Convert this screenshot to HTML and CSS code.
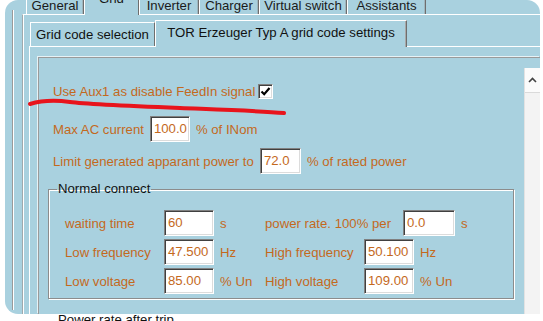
FILE: index.html
```html
<!DOCTYPE html>
<html lang="en">
<head>
  <meta charset="UTF-8">
  <title>Grid code settings</title>
  <link rel="stylesheet" href="styles.css">
</head>
<body>
  <div class="shot">
    <div class="edge"></div>
    <div class="outer">
      <!-- main tabs -->
      <div class="tabs">
        <div class="tab w58">General</div>
        <div class="tab w55 active">Grid</div>
        <div class="tab w60">Inverter</div>
        <div class="tab w60">Charger</div>
        <div class="tab w88">Virtual switch</div>
        <div class="tab w79">Assistants</div>
      </div>
      <div class="page">
        <!-- grid code tabs -->
        <div class="subtabs">
          <div class="subtab">Grid code selection</div>
          <div class="subtab active">TOR Erzeuger Typ A grid code settings</div>
        </div>
        <div class="subpage">
          <div class="scrollbox">
            <div class="content">
              <div class="line first">
                <span>Use Aux1 as disable FeedIn signal</span>
                <span class="check">
                  <svg width="11" height="11" viewBox="0 0 11 11"><path d="M1.5 5.5 L4.2 8.2 L9.5 2" fill="none" stroke="#000" stroke-width="2.2"/></svg>
                </span>
              </div>
              <div class="line">
                <span>Max AC current</span>
                <span class="field w40">100.0</span>
                <span>% of INom</span>
              </div>
              <div class="line">
                <span>Limit generated apparant power to</span>
                <span class="field w41">72.0</span>
                <span>% of rated power</span>
              </div>

              <fieldset class="group">
                <legend>Normal connect</legend>
                <div class="grow">
                  <span class="gl">waiting time</span>
                  <span class="field w50">60</span>
                  <span class="unit">s</span>
                  <span class="gl wide">power rate. 100% per</span>
                  <span class="field w52">0.0</span>
                  <span class="unit">s</span>
                </div>
                <div class="grow">
                  <span class="gl">Low frequency</span>
                  <span class="field w50">47.500</span>
                  <span class="unit">Hz</span>
                  <span class="gl">High frequency</span>
                  <span class="field w50">50.100</span>
                  <span class="unit">Hz</span>
                </div>
                <div class="grow">
                  <span class="gl">Low voltage</span>
                  <span class="field w50">85.00</span>
                  <span class="unit">% Un</span>
                  <span class="gl">High voltage</span>
                  <span class="field w50">109.00</span>
                  <span class="unit">% Un</span>
                </div>
              </fieldset>
              <div class="next-group">Power rate after trip</div>
            </div>
            <div class="scrollbar">
              <div class="sb-up">
                <svg width="9" height="6" viewBox="0 0 9 6"><path d="M1 5 L4.5 1.5 L8 5" fill="none" stroke="#444" stroke-width="1.6"/></svg>
              </div>
              <div class="sb-track"></div>
            </div>
          </div>
        </div>
      </div>
    </div>
  </div>

  <!-- red hand drawn mark -->
  <svg class="marker" width="543" height="321" viewBox="0 0 543 321">
    <path d="M30 104 C40 101 55 100 70 102 S130 106 180 108 S260 111 284 113" fill="none" stroke="#e8141c" stroke-width="4" stroke-linecap="round"/>
  </svg>
</body>
</html>
```

FILE: styles.css
```css
/* screenshot of the settings dialog */
body {
  margin: 0;
  background: #fff;
  font-family: "Liberation Sans", Arial, sans-serif;
  font-size: 13.2px;
  color: #c4691d;
  position: relative;
  height: 321px;
  overflow: hidden;
}
.shot {
  margin-left: 5px;
  width: 535px;
  height: 314px;
  background: #a9d1df;
  border-radius: 13px;
  display: flex;
}
.edge {
  margin: 10px 0 4px 7px;
  width: 9px;
  border-left: 1px solid #9a9a9a;
  box-shadow: inset 1px 0 #fff;
}
.outer {
  flex: 1;
  margin-top: -6px;
  display: flex;
  flex-direction: column;
  min-height: 0;
  color: #000;
}

/* main tabs */
.tabs {
  height: 20px;
  padding-left: 4px;
  display: flex;
  align-items: flex-end;
  flex-shrink: 0;
}
.tab {
  box-sizing: border-box;
  height: 20px;
  padding-top: 4px;
  line-height: 16px;
  text-align: center;
  border-left: 1px solid #fff;
  border-right: 1px solid #6e6e6e;
  box-shadow: inset -1px 0 #9fb6be;
  color: #1a1a1a;
}
.tab.active {
  padding-top: 0;
  height: 24px;
  margin-bottom: -1px;
  position: relative;
  z-index: 1;
  background: #a9d1df;
  box-shadow: none;
}
.w55 { width: 55px; }
.w58 { width: 58px; }
.w60 { width: 60px; }
.w79 { width: 79px; }
.w88 { width: 88px; }

.page {
  flex: 1;
  min-height: 0;
  display: flex;
  flex-direction: column;
  border-top: 1px solid #fff;
  border-left: 1px solid #9fa9ad;
  box-shadow: inset 1px 0 #fff;
  padding-left: 6px;
}

/* grid code tabs */
.subtabs {
  height: 31px;
  display: flex;
  align-items: flex-start;
  padding-left: 1px;
  flex-shrink: 0;
}
.subtab {
  box-sizing: border-box;
  margin-top: 7px;
  width: 125px;
  height: 24px;
  line-height: 23px;
  text-align: center;
  border-top: 1px solid #fff;
  border-left: 1px solid #fff;
  border-right: 1px solid #6e6e6e;
  color: #111;
}
.subtab.active {
  margin-top: 5px;
  width: 252px;
  height: 27px;
  line-height: 24px;
  margin-bottom: -1px;
  position: relative;
  z-index: 1;
  background: #a9d1df;
  box-shadow: inset -1px 0 #a8a8a8;
}
.subpage {
  flex: 1;
  min-height: 0;
  display: flex;
  border-top: 1px solid #fff;
  border-left: 1px solid #fff;
  padding: 10px 0 0 8px;
}
.scrollbox {
  flex: 1;
  min-height: 0;
  display: flex;
  border-top: 1px solid #9a9a9a;
  border-left: 1px solid #9a9a9a;
  box-shadow: -1px -1px 0 #e6f2f6;
}
.content {
  flex: 1;
  padding: 20px 0 0 9px;
  color: #c4691d;
}

/* rows */
.line {
  display: flex;
  align-items: center;
  height: 26px;
  gap: 6px;
  margin-left: 5px;
  margin-bottom: 6px;
}
.line.first {
  gap: 3px;
  margin-bottom: 12px;
}
.check {
  box-sizing: border-box;
  width: 15px;
  height: 15px;
  background: #fff;
  border: 1px solid;
  border-color: #808080 #fff #fff #808080;
  box-shadow: inset 1px 1px 0 #404040, inset -1px -1px 0 #dcdcdc;
  display: flex;
  align-items: center;
  justify-content: center;
}
.field {
  box-sizing: border-box;
  height: 26px;
  line-height: 23px;
  padding-left: 3px;
  background: #fff;
  border: 1px solid;
  border-color: #808080 #fff #fff #808080;
  box-shadow: inset 1px 1px 0 #404040, inset -1px -1px 0 #dcdcdc;
  white-space: nowrap;
  overflow: hidden;
}
.w40 { width: 40px; }
.w41 { width: 41px; }
.w50 { width: 50px; }
.w52 { width: 52px; }

/* group box */
.group {
  margin: 7px 0 0 0;
  width: 466px;
  box-sizing: border-box;
  padding: 13px 0 4px 16px;
  border: 1px solid #8c8c8c;
  box-shadow: inset 1px 1px 0 #fff, 1px 1px 0 #fff;
  min-width: 0;
}
.group legend {
  margin-left: -8px;
  padding: 0 1px;
  line-height: 16px;
  color: #111;
}
.grow {
  display: flex;
  align-items: center;
  height: 26px;
  margin-bottom: 3px;
}
.grow:last-child {
  margin-bottom: 0;
}
.gl {
  width: 99px;
}
.gl.wide {
  width: 138px;
}
.unit {
  margin-left: 6px;
  width: 45px;
}
.next-group {
  margin: 13px 0 0 10px;
  line-height: 16px;
  color: #111;
}

/* scroll bar */
.scrollbar {
  width: 15px;
  margin-top: 10px;
  background: #f3f3f3;
  border-left: 1px solid #e2e2e2;
  display: flex;
  flex-direction: column;
}
.sb-up {
  height: 24px;
  background: #fbfbfb;
  border-bottom: 1px solid #dadada;
  display: flex;
  align-items: center;
  justify-content: center;
}
.sb-track {
  flex: 1;
}

.marker {
  position: absolute;
  left: 0;
  top: 0;
  pointer-events: none;
}
```
